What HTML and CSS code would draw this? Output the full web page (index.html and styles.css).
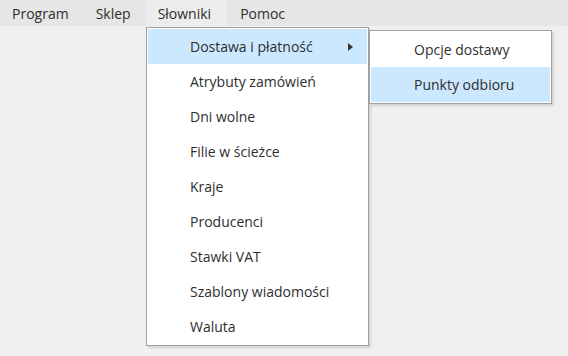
FILE: index.html
```html
<!DOCTYPE html>
<html lang="pl">
<head>
    <meta charset="UTF-8">
    <title>Słowniki</title>
    <link rel="stylesheet" href="styles.css">
</head>
<body>
    <div class="menubar">
        <span class="menubar-item">Program</span>
        <span class="menubar-item">Sklep</span>
        <span class="menubar-item open">Słowniki</span>
        <span class="menubar-item">Pomoc</span>
    </div>

    <div class="menu main-menu">
        <div class="menu-item active">
            Dostawa i płatność
            <svg class="arrow" width="5" height="8" viewBox="0 0 5 8"><path d="M0 0 L5 4 L0 8 Z" fill="#333"/></svg>
        </div>
        <div class="menu-item">Atrybuty zamówień</div>
        <div class="menu-item">Dni wolne</div>
        <div class="menu-item">Filie w ścieżce</div>
        <div class="menu-item">Kraje</div>
        <div class="menu-item">Producenci</div>
        <div class="menu-item">Stawki VAT</div>
        <div class="menu-item">Szablony wiadomości</div>
        <div class="menu-item">Waluta</div>
    </div>

    <div class="menu sub-menu">
        <div class="menu-item">Opcje dostawy</div>
        <div class="menu-item active">Punkty odbioru</div>
    </div>
</body>
</html>
```

FILE: styles.css
```css
body {
    margin: 0;
    width: 568px;
    height: 356px;
    background-color: #f0f0f0;
    font-family: "Open Sans", sans-serif;
    font-size: 14px;
    color: #2e2e2e;
    position: relative;
    overflow: hidden;
}

.menubar {
    display: flex;
    height: 26px;
    background-color: #e6e6e6;
}

.menubar-item {
    display: flex;
    align-items: center;
    padding: 0 14px 0 12px;
    margin-right: 1px;
}

.menubar-item.open {
    background-color: #ededed;
    padding-right: 16px;
}

.menu {
    position: absolute;
    background-color: #fff;
    border: 1px solid #a0a0a0;
    padding: 1px;
    box-shadow: 2px 2px 2px rgba(0, 0, 0, 0.12);
}

.main-menu {
    left: 146px;
    top: 27px;
    width: 219px;
}

.sub-menu {
    left: 369px;
    top: 30px;
    width: 179px;
}

.menu-item {
    height: 35px;
    display: flex;
    align-items: center;
    padding-left: 42px;
    position: relative;
}

.sub-menu .menu-item {
    padding-left: 43px;
}

.menu-item.active {
    background-color: #cce8ff;
}

.arrow {
    position: absolute;
    left: 200px;
    top: 14px;
}
```
